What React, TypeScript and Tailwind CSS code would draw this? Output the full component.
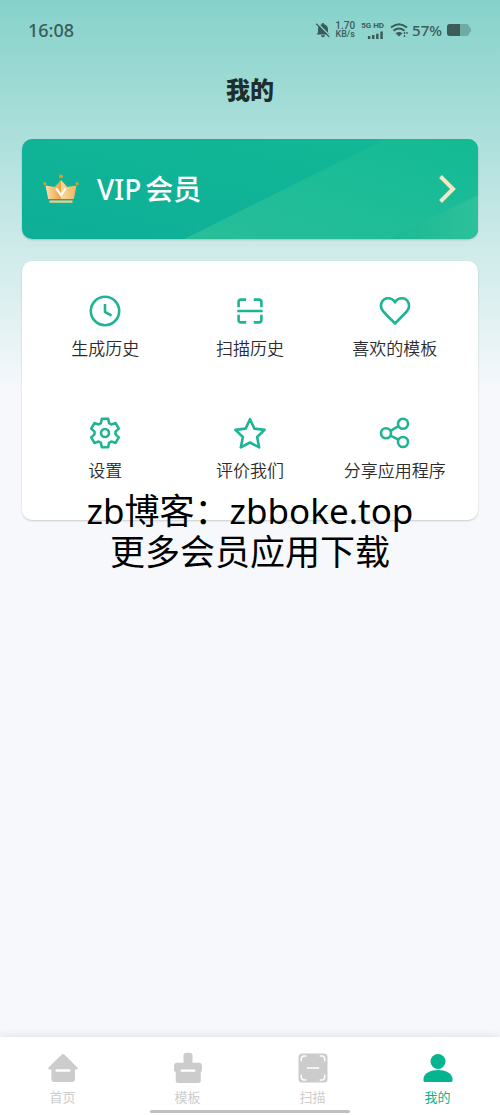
import type { ReactNode } from "react";

type Item = { label: string; icon: ReactNode };

const line = {
  viewBox: "0 0 32 32",
  fill: "none",
  stroke: "currentColor",
  strokeWidth: 2.6,
  strokeLinejoin: "round" as const,
  className: "size-8",
  "aria-hidden": true,
};

const items: Item[] = [
  {
    label: "生成历史",
    icon: (
      <svg {...line}>
        <circle cx="16" cy="16" r="14.2" />
        <path d="M16 9v8l6.5 3.7" strokeLinejoin="miter" />
      </svg>
    ),
  },
  {
    label: "扫描历史",
    icon: (
      <svg {...line}>
        <path d="M4.6 12.3V7Q4.6 4.6 7 4.6h5.2M19.8 4.6H25q2.4 0 2.4 2.4v5.3M4.6 19.7V25q0 2.4 2.4 2.4h5.2M19.8 27.4H25q2.4 0 2.4-2.4v-5.3M3.3 16h25.4" />
      </svg>
    ),
  },
  {
    label: "喜欢的模板",
    icon: (
      <svg {...line}>
        <path d="M16 28.5 4.3 16.5C-.3 11.5 2.4 3.3 9.2 3.3c3 0 5.3 1.5 6.8 4 1.5-2.5 3.8-4 6.8-4 6.8 0 9.5 8.2 4.9 13.2Z" />
      </svg>
    ),
  },
  {
    label: "设置",
    icon: (
      <svg {...line}>
        <path d="M12.8 1.8h6.4l.9 4.4 2.2 1.3 4.3-1.4 3.2 5.5-3.3 3v2.8l3.3 3-3.2 5.5-4.3-1.4-2.2 1.3-.9 4.4h-6.4l-.9-4.4-2.2-1.3-4.3 1.4-3.2-5.5 3.3-3v-2.8l-3.3-3 3.2-5.5 4.3 1.4 2.2-1.3Z" />
        <circle cx="16" cy="16" r="4" />
      </svg>
    ),
  },
  {
    label: "评价我们",
    icon: (
      <svg {...line}>
        <path d="m16 2.2 4.4 9.4 10.2 1.3-7.5 7.1 2.1 10.4L16 25.5l-9.2 4.9L8.9 20l-7.5-7.1 10.2-1.3Z" />
      </svg>
    ),
  },
  {
    label: "分享应用程序",
    icon: (
      <svg {...line}>
        <circle cx="7" cy="16.3" r="5" />
        <circle cx="24" cy="6.8" r="5" />
        <circle cx="24" cy="25" r="5" />
        <path d="m11.4 13.8 8.2-4.6M11.4 18.7l8.2 4" />
      </svg>
    ),
  },
];

const tabs: Item[] = [
  {
    label: "首页",
    icon: (
      <svg viewBox="0 0 32 32" className="size-8" aria-hidden="true">
        <path
          d="M14.7 2.5q1.3-1.2 2.6 0l13.1 13q1.2 1.7-.7 1.9H28v10.2q0 2.4-2.4 2.4H6.8q-2.4 0-2.4-2.4V17.4H2.3q-1.9-.2-.7-1.9Z"
          fill="currentColor"
        />
        <rect x="8.5" y="17.3" width="15" height="2.4" rx="1" fill="white" />
      </svg>
    ),
  },
  {
    label: "模板",
    icon: (
      <svg viewBox="0 0 32 32" className="size-8" aria-hidden="true">
        <path
          d="M11.5 3.5q0-2.8 2.8-2.8h3.4q2.8 0 2.8 2.8v7.3H27q3 0 3 3v4q0 2-1.2 2.2v8.5q0 2.5-2.5 2.5H6.2q-2.5 0-2.5-2.5V20Q2 19.6 2 17.8v-4q0-3 3-3h6.5Z"
          fill="currentColor"
        />
        <rect x="8.5" y="17.4" width="15" height="2.4" rx="1" fill="white" />
      </svg>
    ),
  },
  {
    label: "扫描",
    icon: (
      <svg viewBox="0 0 32 32" className="size-8" aria-hidden="true">
        <rect x="1.5" y="1.5" width="29" height="29" rx="3.5" fill="currentColor" />
        <path
          d="M4.3 8.8V7q0-3 3-3h1.5M23.2 4h1.5q3 0 3 3v1.8M4.3 23.2V25q0 3 3 3h1.5M23.2 28h1.5q3 0 3-3v-1.8M10.3 16h11.4"
          fill="none"
          stroke="white"
          strokeWidth="1.5"
          strokeLinecap="round"
        />
      </svg>
    ),
  },
  {
    label: "我的",
    icon: (
      <svg viewBox="0 0 32 32" className="size-8" aria-hidden="true">
        <circle cx="16" cy="9.5" r="7.5" fill="currentColor" />
        <path d="M1.5 28.5V26C2.5 21 8.5 18 16 18s13.5 3 14.5 8v2.5q0 1.5-1.5 1.5H3q-1.5 0-1.5-1.5Z" fill="currentColor" />
      </svg>
    ),
  },
];

function StatusBar() {
  return (
    <div className="flex h-15 items-center justify-between px-7 text-[#3b5c59]">
      <span className="text-lg font-medium">16:08</span>
      <div className="flex items-center gap-1">
        <svg viewBox="0 0 16 16" className="size-4" aria-hidden="true">
          <path d="M8 1a1.2 1.2 0 0 1 1.2 1.2C11.6 2.8 13 4.7 13 7v3.5l1.5 2H1.5l1.5-2V7c0-2.3 1.4-4.2 3.8-4.8A1.2 1.2 0 0 1 8 1ZM6 13.3h4a2 2 0 0 1-4 0Z" fill="currentColor" />
          <path d="m2.2 1 13 13.2" stroke="#8fd5ce" strokeWidth="1.5" />
          <path d="m1.2 1.7 13 13.2" stroke="currentColor" strokeWidth="1.3" />
        </svg>
        <div className="flex flex-col items-center font-['Roboto'] text-[9px] leading-[9px] font-medium">
          <span className="text-[10px]">1.70</span>
          <span>KB/s</span>
        </div>
        <div className="mx-0.5 flex flex-col items-end gap-px font-['Roboto']">
          <span className="text-[8px] leading-2 font-bold">5G HD</span>
          <svg viewBox="0 0 18 9" className="h-2 w-4.5" fill="currentColor" aria-hidden="true">
            <path d="M1 5.5h2.8V9H1ZM5.6 4.5h2.8V9H5.6ZM10.2 3H13v6h-2.800ZM15 .5h2.800V9H15Z" />
          </svg>
        </div>
        <svg viewBox="0 0 18 14" className="h-3.5 w-4.5" fill="none" stroke="currentColor" strokeWidth="2" aria-hidden="true">
          <path d="M1 4.5q8-6.500 16 0M3.500 7.700q5.500-4.400 11 0" />
          <path d="M5.500 10.300q3.500-2.800 7 0L9 13.500Z" fill="currentColor" stroke="none" />
          <path d="M14.500 9v2M14.500 12v2M17 9v2" strokeWidth="1.3" />
        </svg>
        <span className="text-[15px] font-medium">57%</span>
        <svg viewBox="0 0 26 14" className="h-3.5 w-6.5" aria-hidden="true">
          <path d="M4 1h16q3 0 3 2.5l2 2v3l-2 2Q23 13 20 13H4q-3 0-3-3V4q0-3 3-3Z" fill="#70aaa5" />
          <path d="M14 1v12H4q-3 0-3-3V4q0-3 3-3Z" fill="currentColor" />
        </svg>
      </div>
    </div>
  );
}

function Crown() {
  return (
    <svg viewBox="0 0 36 30" className="h-7.5 w-9" aria-hidden="true">
      <defs>
        <linearGradient id="gold-left">
          <stop stopColor="#fce0b0" />
          <stop offset="1" stopColor="#eda03d" />
        </linearGradient>
        <linearGradient id="gold-right">
          <stop stopColor="#fad89e" />
          <stop offset="1" stopColor="#f0b55f" />
        </linearGradient>
      </defs>
      <path d="m2.5 11.5 9.2 1.5L18 6v19H5.2Z" fill="url(#gold-left)" />
      <path d="m33.5 11.5-9.2 1.5L18 6v19h12.8Z" fill="url(#gold-right)" />
      <path d="M6.5 26.5h23v2.2h-23Z" fill="#f5cc86" />
      <circle cx="18" cy="2.3" r="1.9" fill="#e39a31" />
      <circle cx="1.8" cy="9.5" r="1.5" fill="#e39a31" />
      <circle cx="34.2" cy="9.5" r="1.5" fill="#e39a31" />
      <path d="m13.3 14.3 4.7 7 4.7-7" fill="none" stroke="white" strokeWidth="2.2" />
    </svg>
  );
}

export default function App() {
  return (
    <div className="flex min-h-screen flex-col bg-[#f6f8fc] bg-[linear-gradient(to_bottom,#86d2ca_0px,#acdfdb_135px,#cdeae9_245px,#f6f8fc_390px)] font-['Noto_Sans','Noto_Sans_CJK_SC',sans-serif] text-[#333333]">
      <StatusBar />
      <header className="flex h-15 items-center justify-center text-[#1d2e2c]">
        <h1 className="text-2xl font-black">我的</h1>
      </header>
      <main className="flex flex-1 flex-col gap-[22px] px-[22px] pt-[19px]">
        <button
          type="button"
          className="relative flex h-25 w-full items-center overflow-hidden rounded-[10px] bg-linear-to-tr from-[#0eae98] to-[#12b995] px-[21px] text-white shadow-[0_1px_2px_rgba(0,0,0,0.18)]"
        >
          <svg viewBox="0 0 456 100" preserveAspectRatio="none" className="absolute inset-0 size-full" aria-hidden="true">
            <defs>
              <linearGradient id="sheen" x1="0" y1="1" x2="1" y2="0">
                <stop stopColor="#29be9a" />
                <stop offset="0.6" stopColor="#1bbc97" />
                <stop offset="1" stopColor="#12ba93" />
              </linearGradient>
              <linearGradient id="corner" x1="0" y1="0" x2="1" y2="0">
                <stop stopColor="#1bb995" />
                <stop offset="1" stopColor="#2cc19a" />
              </linearGradient>
            </defs>
            <path d="M162 100 364 0h92v100Z" fill="url(#sheen)" />
            <path d="M366 100 456 56v44Z" fill="url(#corner)" />
          </svg>
          <span className="relative flex w-full items-center">
            <Crown />
            <span className="ml-[18px] flex gap-1 text-[28px] leading-10 font-medium">
              <span>VIP</span>
              <span>会员</span>
            </span>
            <svg viewBox="0 0 20 30" className="ml-auto h-7.5 w-5" fill="none" stroke="#f2e6c5" strokeWidth="4" aria-hidden="true">
              <path d="m3.5 2.5 12.5 12.5L3.5 27.5" />
            </svg>
          </span>
        </button>
        <section className="relative rounded-[10px] bg-white px-[11px] pt-[34px] pb-[41px] shadow-[0_1px_2px_rgba(0,0,0,0.18)]">
          <div className="grid grid-cols-3 gap-y-15">
            {items.map((item) => (
              <button key={item.label} type="button" className="flex flex-col items-center gap-3 text-[#1fb494]">
                {item.icon}
                <span className="text-[17px] leading-5 font-[350] text-[#2b2b2b] -mb-0.5">{item.label}</span>
              </button>
            ))}
          </div>
          <div className="pointer-events-none absolute inset-x-0 top-[229px] text-center text-[35px] leading-[41px] text-black">
            <p>zb博客：zbboke.top</p>
            <p>更多会员应用下载</p>
          </div>
        </section>
      </main>
      <nav className="relative grid h-[78px] grid-cols-4 bg-white shadow-[0_-1px_8px_rgba(40,50,80,0.12)]">
        {tabs.map((tab) => (
          <a
            key={tab.label}
            href="#"
            aria-current={tab.label === "我的" ? "page" : undefined}
            className="flex flex-col items-center gap-1 pt-[15px] text-[#cccccc] aria-[current=page]:text-[#06b58f]"
          >
            {tab.icon}
            <span className="text-[13px] leading-[18px]">{tab.label}</span>
          </a>
        ))}
        <div className="absolute bottom-0.5 left-1/2 h-[3px] w-50 -translate-x-1/2 rounded-full bg-[#bfbfbf]" />
      </nav>
    </div>
  );
}
